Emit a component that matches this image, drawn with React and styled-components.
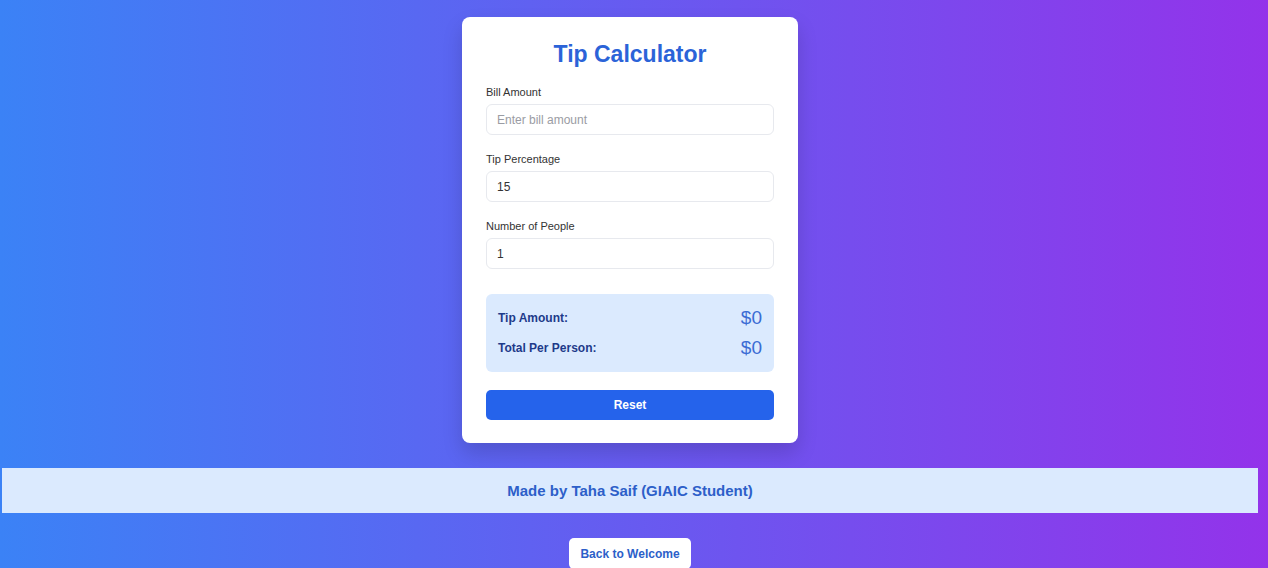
import React, { useState } from "react";
import styled, { createGlobalStyle } from "styled-components";

const GlobalStyle = createGlobalStyle`
  html, body {
    margin: 0;
    padding: 0;
  }
  body {
    font-family: "Liberation Sans", Arial, sans-serif;
    background: linear-gradient(90deg, #3b82f6 0%, #9333ea 100%);
    min-height: 100vh;
    overflow: hidden;
  }
  * { box-sizing: border-box; }
`;

const Page = styled.div`
  min-height: 568px;
  display: flex;
  flex-direction: column;
  padding: 17px 10px 0 2px;
`;

const Card = styled.div`
  width: 336px;
  margin: 0 auto;
  background: #ffffff;
  border-radius: 8px;
  box-shadow: 0 10px 20px rgba(0, 0, 0, 0.15);
  padding: 24px 24px 23px;
`;

const Title = styled.h1`
  margin: 0 0 18px;
  text-align: center;
  font-size: 23px;
  font-weight: 700;
  color: #2b63d8;
`;

const Field = styled.div`
  & + & { margin-top: 18px; }
`;

const Label = styled.label`
  display: block;
  font-size: 11px;
  color: #333;
  margin-bottom: 6px;
`;

const Input = styled.input`
  display: block;
  width: 100%;
  height: 31px;
  padding: 0 10px;
  border: 1px solid #e7e9ee;
  border-radius: 6px;
  font-family: inherit;
  font-size: 12px;
  color: #333;
  outline: none;
  &::placeholder { color: #9a9ca3; }
`;

const Results = styled.div`
  margin-top: 25px;
  background: #dbeafe;
  border-radius: 6px;
  padding: 13px 12px 13px;
  display: flex;
  flex-direction: column;
  gap: 8px;
`;

const ResultRow = styled.div`
  display: flex;
  justify-content: space-between;
  align-items: center;
  height: 22px;
`;

const ResultLabel = styled.span`
  font-size: 12px;
  font-weight: 700;
  color: #1e3a8a;
`;

const ResultValue = styled.span`
  font-size: 19px;
  color: #3b6cd4;
`;

const ResetButton = styled.button`
  display: block;
  width: 100%;
  height: 30px;
  margin-top: 18px;
  border: none;
  border-radius: 5px;
  background: #2563eb;
  color: #fff;
  font-family: inherit;
  font-size: 12px;
  font-weight: 700;
  cursor: pointer;
`;

const Footer = styled.div`
  margin-top: 25px;
  height: 45px;
  background: #dbeafe;
  display: flex;
  align-items: center;
  justify-content: center;
  font-size: 15px;
  font-weight: 700;
  color: #2d5fc9;
`;

const BackButton = styled.button`
  align-self: center;
  margin-top: 25px;
  height: 31px;
  padding: 0 11px;
  background: #fff;
  border: none;
  border-radius: 5px;
  font-family: inherit;
  font-size: 12px;
  font-weight: 700;
  color: #2d5fc9;
  cursor: pointer;
`;

export default function App() {
  const [bill, setBill] = useState("");
  const [tip, setTip] = useState("15");
  const [people, setPeople] = useState("1");

  const billNum = parseFloat(bill) || 0;
  const tipAmount = (billNum * (parseFloat(tip) || 0)) / 100;
  const count = parseInt(people, 10) || 1;
  const perPerson = (billNum + tipAmount) / count;
  const fmt = (n) => "$" + (Math.round(n * 100) / 100);

  const reset = () => {
    setBill("");
    setTip("15");
    setPeople("1");
  };

  return (
    <>
      <GlobalStyle />
      <Page>
        <Card>
          <Title>Tip Calculator</Title>
          <Field>
            <Label>Bill Amount</Label>
            <Input
              type="text"
              placeholder="Enter bill amount"
              value={bill}
              onChange={(e) => setBill(e.target.value)}
            />
          </Field>
          <Field>
            <Label>Tip Percentage</Label>
            <Input type="text" value={tip} onChange={(e) => setTip(e.target.value)} />
          </Field>
          <Field>
            <Label>Number of People</Label>
            <Input type="text" value={people} onChange={(e) => setPeople(e.target.value)} />
          </Field>
          <Results>
            <ResultRow>
              <ResultLabel>Tip Amount:</ResultLabel>
              <ResultValue>{fmt(tipAmount)}</ResultValue>
            </ResultRow>
            <ResultRow>
              <ResultLabel>Total Per Person:</ResultLabel>
              <ResultValue>{fmt(perPerson)}</ResultValue>
            </ResultRow>
          </Results>
          <ResetButton onClick={reset}>Reset</ResetButton>
        </Card>
        <Footer>Made by Taha Saif (GIAIC Student)</Footer>
        <BackButton>Back to Welcome</BackButton>
      </Page>
    </>
  );
}
